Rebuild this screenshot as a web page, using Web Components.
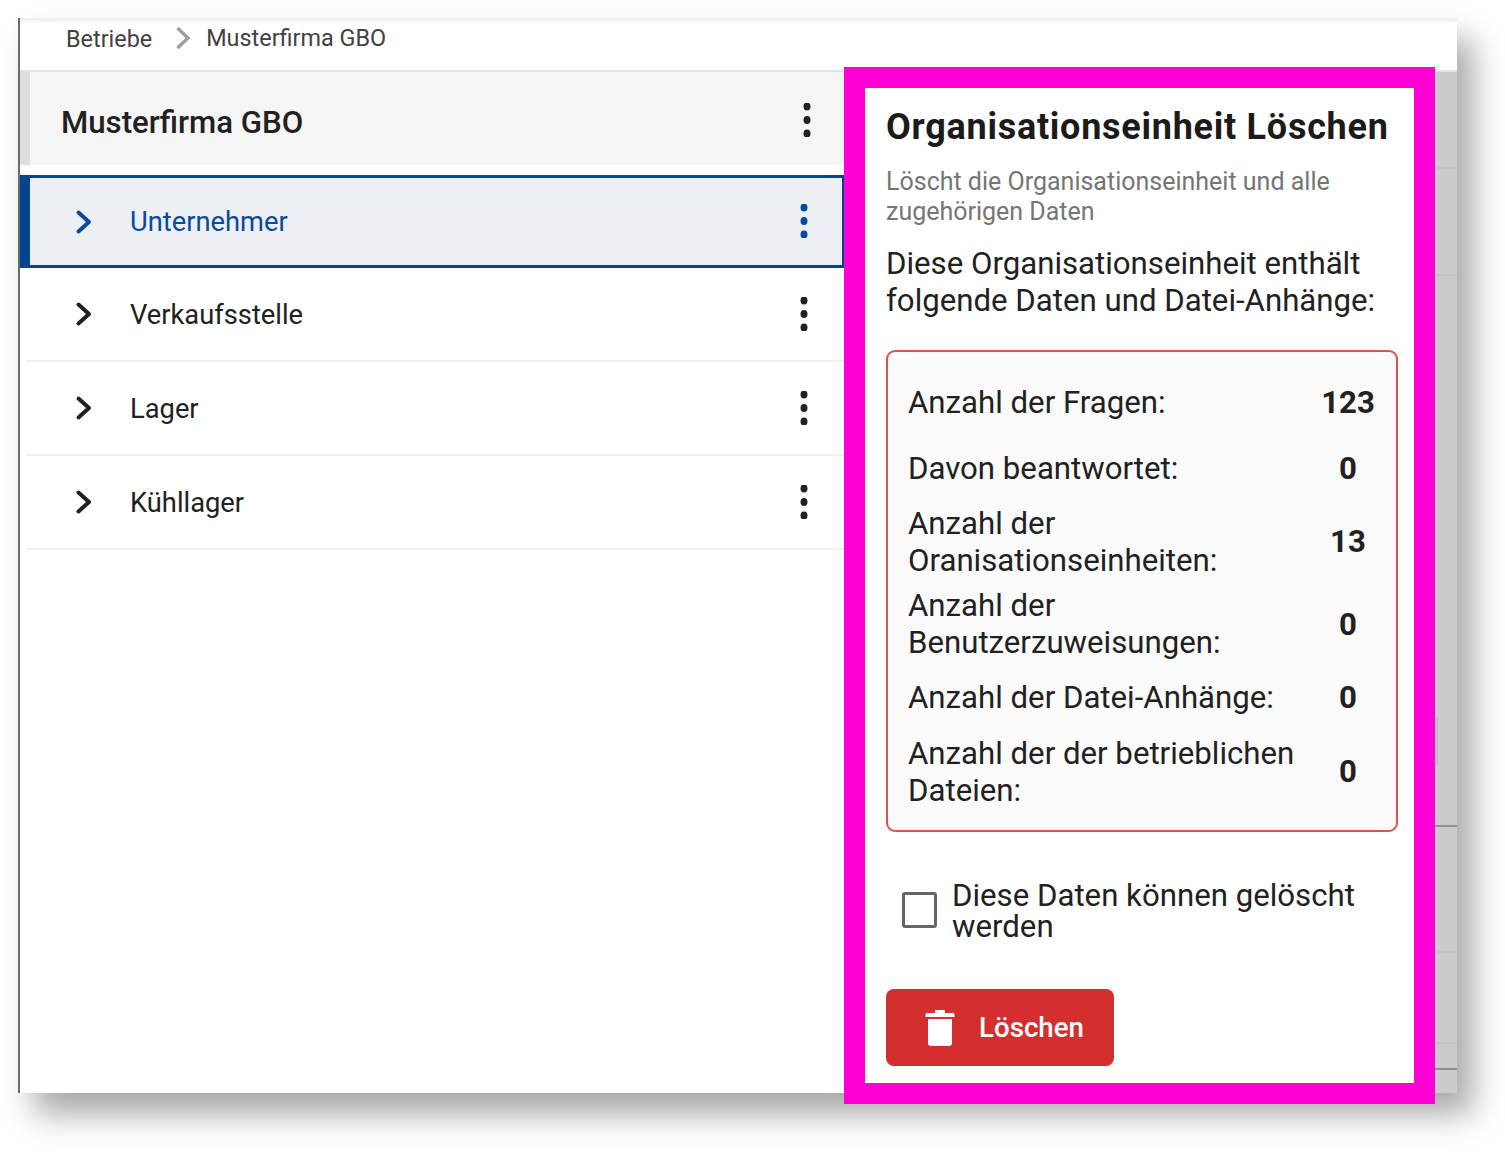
<!DOCTYPE html>
<html lang="de"><head><meta charset="utf-8"><title>Organisationseinheit Löschen</title>
<style>
html,body{margin:0;background:#fff;font-family:Roboto,"Liberation Sans",sans-serif;}
body{width:1505px;height:1152px;overflow:hidden;padding:18px 0 0 18px;box-sizing:border-box;}
</style></head><body>
<x-window>
  <x-crumbs slot="top"><span>Betriebe</span><span>Musterfirma GBO</span></x-crumbs>
  <x-tree-head slot="left">Musterfirma GBO</x-tree-head>
  <x-row slot="left" selected>Unternehmer</x-row>
  <x-row slot="left">Verkaufsstelle</x-row>
  <x-row slot="left">Lager</x-row>
  <x-row slot="left">Kühllager</x-row>
  <x-panel slot="panel">
    <x-stats>
      <x-stat label="Anzahl der Fragen:" h="68">123</x-stat>
      <x-stat label="Davon beantwortet:" h="64">0</x-stat>
      <x-stat label="Anzahl der Oranisationseinheiten:" h="83">13</x-stat>
      <x-stat label="Anzahl der Benutzerzuweisungen:" h="82">0</x-stat>
      <x-stat label="Anzahl der Datei-Anhänge:" h="65">0</x-stat>
      <x-stat label="Anzahl der der betrieblichen Dateien:" h="83">0</x-stat>
    </x-stats>
    <x-check>Diese Daten können gelöscht werden</x-check>
    <x-danger>Löschen</x-danger>
  </x-panel>
</x-window>
<script>
const mk=(name,html)=>customElements.define(name,class extends HTMLElement{
  connectedCallback(){ if(this.shadowRoot) return; const r=this.attachShadow({mode:'open'}); r.innerHTML=typeof html==='function'?html(this):html; }
});
const dots=(c)=>`<svg width="10" height="34" viewBox="0 0 10 34" fill="${c}"><ellipse cx="5" cy="3.5" rx="3.5" ry="4"/><ellipse cx="5" cy="17" rx="3.5" ry="4"/><ellipse cx="5" cy="30.5" rx="3.5" ry="4"/></svg>`;
const chev=(c)=>`<svg width="18" height="26" viewBox="0 0 18 26" fill="none" stroke="${c}" stroke-width="4" stroke-linecap="round" stroke-linejoin="round"><path d="M3.5 3.5 L14 13 L3.5 22.5"/></svg>`;

mk('x-window',`<style>
:host{display:block;position:relative;width:1439px;height:1075px;background:#fff;box-shadow:16px 21px 30px rgba(0,0,0,.34);}
.wrap{display:flex;flex-direction:column;height:100%;border-left:2px solid #6b6b6b;box-sizing:border-box;}
.top{height:52px;border-bottom:2px solid #e4e4e4;flex:none;background:linear-gradient(#ececec,#fff 6px);}
.main{flex:1;display:flex;min-height:0;}
.left{width:824px;flex:none;display:flex;flex-direction:column;}
.right{flex:1;background:#cbcbcb;display:flex;flex-direction:column;}
.right i{display:block;flex:none;border-bottom:2px solid #c3c3c3;}
.right i.d{border-bottom-color:#8f8f8f;}
.sb{position:absolute;left:1417px;top:699px;width:3px;height:48px;background:#bdbdbd;}
.over{position:absolute;left:826px;top:49px;}
</style>
<div class="wrap"><div class="top"><slot name="top"></slot></div>
<div class="main"><div class="left"><slot name="left"></slot></div>
<div class="right"><i style="height:95px"></i><i style="height:105px"></i><i style="height:549px" class="d"></i><i style="height:124px"></i><i style="height:89px"></i><i style="height:24px" class="d"></i></div></div></div>
<div class="sb"></div>
<div class="over"><slot name="panel"></slot></div>`);

mk('x-crumbs',`<style>
:host{display:flex;align-items:center;height:40px;padding-left:46px;font-size:23.4px;color:#424242;}
.a{transform:translateY(1px)}
svg{margin:0 15px 0 23px;}
</style><span class="a">Betriebe</span><svg width="16" height="24" viewBox="0 0 16 24" fill="none" stroke="#9e9e9e" stroke-width="3.4"><path d="M2.5 2 L13 12 L2.5 22"/></svg><span class="b">Musterfirma GBO</span>`);

mk('x-tree-head',`<style>
:host{display:flex;align-items:center;justify-content:space-between;box-sizing:border-box;height:93px;background:#f5f5f5;border-left:10px solid #dedede;padding:0 32px 0 31px;font-size:31.2px;font-weight:500;color:#212121;flex:none;}
svg{transform:translateY(1px)}
span{transform:translateY(4px)}
</style><span><slot></slot></span>`+dots('#212121'));

mk('x-row',(el)=>{const s=el.hasAttribute('selected');const c=s?'#0a4a9c':'#212121';return `<style>
:host{display:flex;align-items:center;box-sizing:border-box;height:94px;flex:none;color:${c};font-size:27.3px;
 ${s?'margin-top:10px;height:93px;background:#eceff4;border:solid #004494;border-width:3px 2px 3px 10px;padding-left:45px;':'border-bottom:2px solid #f0f0f0;margin-left:6px;padding-left:49px;'}}
.t{margin-left:37px;flex:1;${s?'':'transform:translateY(1px);'}}
svg:last-child{margin-right:${s?33:35}px;${s?'transform:translateY(-1px);':''}}
</style>${chev(c)}<span class="t"><slot></slot></span>${dots(c)}`});

mk('x-panel',`<style>
:host{display:block;box-sizing:border-box;width:591px;height:1037px;background:#fff;border:21px solid #ff00d4;overflow:hidden;}
.in{width:549px;box-sizing:border-box;padding:16px 16px 0 21px;color:#212121;}
h2{margin:0;font-size:36px;letter-spacing:.74px;font-weight:700;line-height:46px;color:#1b1b1b;white-space:nowrap;}
.sub{margin:17px 0 0;font-size:25px;line-height:30px;color:#757575;}
.body{margin:18px 0 31px;font-size:31.2px;line-height:37px;color:#212121;}
</style><div class="in">
<h2>Organisationseinheit Löschen</h2>
<p class="sub">Löscht die Organisationseinheit und alle<br>zugehörigen Daten</p>
<p class="body">Diese Organisationseinheit enthält<br>folgende Daten und Datei-Anhänge:</p>
<slot></slot></div>`);

mk('x-stats',`<style>
:host{display:block;box-sizing:border-box;height:482px;border:2px solid #d9534f;border-radius:9px;background:#fafafa;padding:16px 0 0 20px;}
</style><slot></slot>`);

mk('x-stat',(el)=>`<style>
:host{display:flex;align-items:center;height:${el.getAttribute('h')}px;font-size:31.2px;line-height:37px;color:#212121;}
.l{width:400px;flex:none;}
.v{width:80px;text-align:center;font-weight:700;}
</style><span class="l">${el.getAttribute('label')}</span><span class="v"><slot></slot></span>`);

mk('x-check',`<style>
:host{display:flex;align-items:center;margin:48px 0 47px 16px;font-size:31.2px;line-height:31px;color:#212121;}
.b{box-sizing:border-box;width:35px;height:36px;border:3px solid #666;border-radius:3px;flex:none;margin-right:15px;transform:translateY(-1px);}
span{width:440px}
</style><div class="b"></div><span><slot></slot></span>`);

mk('x-danger',`<style>
:host{display:inline-flex;align-items:center;box-sizing:border-box;width:228px;height:77px;background:#d32f2f;border-radius:8px;color:#fff;font-size:27.7px;font-weight:500;padding-left:39px;}
svg{margin-right:24px;}
</style><svg width="30" height="36" viewBox="0 0 30 36" fill="#fff"><path d="M11 0h8a1 1 0 0 1 1 1v2h8a1.500 1.500 0 0 1 1.500 1.500V7H.5V4.500A1.500 1.500 0 0 1 2 3h8V1a1 1 0 0 1 1-1z"/><path d="M3 9h24v24a3 3 0 0 1-3 3H6a3 3 0 0 1-3-3z"/></svg><span><slot></slot></span>`);
</script>
</body></html>
